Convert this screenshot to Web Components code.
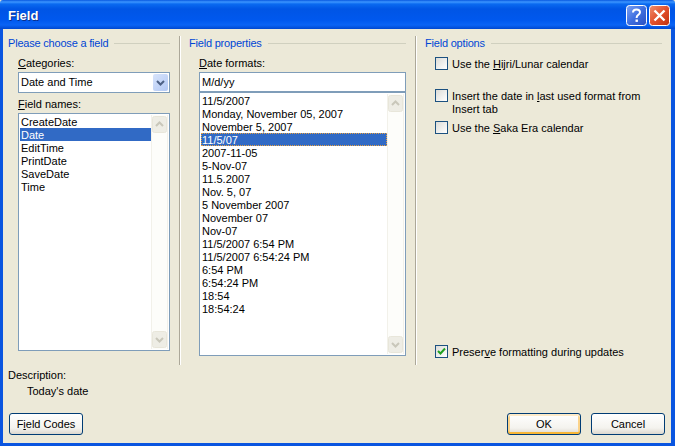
<!DOCTYPE html>
<html>
<head>
<meta charset="utf-8">
<title>Field</title>
<style>
    html, body { margin: 0; padding: 0; background: #ece9d8; overflow: hidden; }
</style>
</head>
<body>
<field-dialog heading="Field">
    <field-group heading="Please choose a field" slot="one">
        <field-label><u>C</u>ategories:</field-label>
        <combo-box>Date and Time</combo-box>
        <field-label style="margin-top:5px"><u>F</u>ield names:</field-label>
        <list-box style="height:238px">
            <list-item>CreateDate</list-item>
            <list-item selected>Date</list-item>
            <list-item>EditTime</list-item>
            <list-item>PrintDate</list-item>
            <list-item>SaveDate</list-item>
            <list-item>Time</list-item>
        </list-box>
    </field-group>
    <field-group heading="Field properties" slot="two">
        <field-label><u>D</u>ate formats:</field-label>
        <text-box>M/d/yy</text-box>
        <list-box style="height:264px">
            <list-item>11/5/2007</list-item>
            <list-item>Monday, November 05, 2007</list-item>
            <list-item>November 5, 2007</list-item>
            <list-item selected focused>11/5/07</list-item>
            <list-item>2007-11-05</list-item>
            <list-item>5-Nov-07</list-item>
            <list-item>11.5.2007</list-item>
            <list-item>Nov. 5, 07</list-item>
            <list-item>5 November 2007</list-item>
            <list-item>November 07</list-item>
            <list-item>Nov-07</list-item>
            <list-item>11/5/2007 6:54 PM</list-item>
            <list-item>11/5/2007 6:54:24 PM</list-item>
            <list-item>6:54 PM</list-item>
            <list-item>6:54:24 PM</list-item>
            <list-item>18:54</list-item>
            <list-item>18:54:24</list-item>
        </list-box>
    </field-group>
    <field-group heading="Field options" slot="three">
        <check-box>Use the <u>H</u>ijri/Lunar calendar</check-box>
        <check-box style="margin-top:18px">Insert the date in <u>l</u>ast used format from<br>Insert tab</check-box>
        <check-box style="margin-top:5px">Use the <u>S</u>aka Era calendar</check-box>
        <check-box style="margin-top:auto;margin-bottom:6px" checked>Preser<u>v</u>e formatting during updates</check-box>
    </field-group>
    <div slot="description">Description:</div>
    <div slot="description" style="margin:3px 0 0 19px">Today's date</div>
    <xp-button slot="left"><span>F<u>i</u>eld Codes</span></xp-button>
    <xp-button slot="right" default>OK</xp-button>
    <xp-button slot="right">Cancel</xp-button>
</field-dialog>

<script>
class FieldDialog extends HTMLElement {
    connectedCallback() {
        let shadowRoot = this.attachShadow({ mode: 'open' });
        shadowRoot.innerHTML = `
        <style>
            :host {
                display: flex;
                flex-direction: column;
                width: 675px;
                height: 446px;
                font: 11px/13px "Liberation Sans", sans-serif;
                color: #000;
            }
            .title {
                height: 29px;
                flex: none;
                display: flex;
                align-items: center;
                gap: 2px;
                padding: 2px 5px 0 8px;
                box-sizing: border-box;
                background: linear-gradient(180deg, #0858e0 0, #3c95ff 2px, #0a6af0 4px, #0055e5 9px, #0058ee 20px, #0a64f5 25px, #0048d0 29px);
                border-radius: 3px 3px 0 0;
            }
            .title b {
                flex: 1;
                color: #fff;
                font: bold 13px "Liberation Sans", sans-serif;
                text-shadow: 1px 1px 0 #0a2f8c;
            }
            .tbtn {
                width: 21px;
                height: 21px;
                display: block;
            }
            .client {
                flex: 1;
                display: flex;
                flex-direction: column;
                min-height: 0;
                background: #ece9d8;
                border: solid #0a55e0;
                border-width: 0 4px 3px 3px;
                box-shadow: 0 1px 0 #00209c;
                padding-top: 7px;
            }
            .cols {
                display: grid;
                grid-template-columns: 176px 236px 252px;
                height: 329px;
            }
            .cols > div {
                display: flex;
                min-height: 0;
            }
            .cols > div + div {
                border-left: 1px solid #aca899;
                box-shadow: inset 1px 0 0 #fff;
            }
            .desc {
                box-sizing: border-box;
                padding: 4px 0 0 5px;
                height: 48px;
            }
            .foot {
                display: flex;
                justify-content: space-between;
                padding: 0 6px 0 6px;
            }
            .foot div {
                display: flex;
                gap: 10px;
            }
        </style>
        <div class="title">
            <b>${this.getAttribute('heading')}</b>
            <svg class="tbtn" viewBox="0 0 21 21">
                <defs><linearGradient id="h" x1="0" y1="0" x2="1" y2="1"><stop offset="0" stop-color="#7ea2f2"/><stop offset=".5" stop-color="#3f6fe0"/><stop offset="1" stop-color="#2a4fc0"/></linearGradient></defs>
                <rect x=".5" y=".5" width="20" height="20" rx="3" fill="url(#h)" stroke="#fff"/>
                <path d="M7 7.5 Q7 4.5 10.5 4.5 Q14 4.5 14 7.3 Q14 9 12 10.2 Q10.6 11 10.6 13" fill="none" stroke="#fff" stroke-width="2"/>
                <rect x="9.5" y="14.5" width="2.4" height="2.4" fill="#fff"/>
            </svg>
            <svg class="tbtn" viewBox="0 0 21 21">
                <defs><linearGradient id="c" x1="0" y1="0" x2="1" y2="1"><stop offset="0" stop-color="#ee9070"/><stop offset=".5" stop-color="#e2502c"/><stop offset="1" stop-color="#c0300c"/></linearGradient></defs>
                <rect x=".5" y=".5" width="20" height="20" rx="3" fill="url(#c)" stroke="#fff"/>
                <path d="M5.5 5.5 L15.5 15.5 M15.5 5.5 L5.5 15.5" stroke="#fff" stroke-width="2.4"/>
            </svg>
        </div>
        <div class="client">
            <div class="cols">
                <div><slot name="one"></slot></div>
                <div><slot name="two"></slot></div>
                <div><slot name="three"></slot></div>
            </div>
            <div class="desc"><slot name="description"></slot></div>
            <div class="foot">
                <div><slot name="left"></slot></div>
                <div><slot name="right"></slot></div>
            </div>
        </div>
        `;
    }
}
customElements.define('field-dialog', FieldDialog);

class FieldGroup extends HTMLElement {
    connectedCallback() {
        let shadowRoot = this.attachShadow({ mode: 'open' });
        shadowRoot.innerHTML = `
        <style>
            :host {
                display: flex;
                flex-direction: column;
                width: 100%;
                box-sizing: border-box;
                padding: 0 5px 0 9px;
            }
            :host([slot="one"]) { padding: 0 9px 0 5px; }
            :host([slot="two"]) { padding-right: 9px; }
            .head {
                display: flex;
                align-items: center;
                gap: 6px;
                height: 14px;
                color: #0046d5;
            }
            .head span { letter-spacing: -.2px; }
            .head i {
                flex: 1;
                height: 0;
                border-top: 1px solid #d0d0bf;
            }
            .body {
                flex: 1;
                display: flex;
                flex-direction: column;
                min-height: 0;
                padding: 7px 0 0 10px;
            }
        </style>
        <div class="head"><span>${this.getAttribute('heading')}</span><i></i></div>
        <div class="body"><slot></slot></div>
        `;
    }
}
customElements.define('field-group', FieldGroup);

class FieldLabel extends HTMLElement {
    connectedCallback() {
        let shadowRoot = this.attachShadow({ mode: 'open' });
        shadowRoot.innerHTML = `
        <style>
            :host { display: block; height: 13px; margin-bottom: 2px; }
        </style>
        <slot></slot>
        `;
    }
}
customElements.define('field-label', FieldLabel);

class ComboBox extends HTMLElement {
    connectedCallback() {
        let shadowRoot = this.attachShadow({ mode: 'open' });
        shadowRoot.innerHTML = `
        <style>
            :host {
                display: flex;
                align-items: center;
                height: 21px;
                box-sizing: border-box;
                background: #fff;
                border: 1px solid #7f9db9;
                padding: 1px 1px 1px 2px;
            }
            span { flex: 1; }
            .btn {
                width: 15px;
                height: 17px;
                background: linear-gradient(135deg, #d8e4fb, #b2c8f4);
                border-radius: 2px;
                display: block;
            }
        </style>
        <span><slot></slot></span>
        <svg class="btn" viewBox="0 0 15 17"><path d="M4 7 L7.5 10.5 L11 7" fill="none" stroke="#4d6185" stroke-width="2"/></svg>
        `;
    }
}
customElements.define('combo-box', ComboBox);

class TextBox extends HTMLElement {
    connectedCallback() {
        let shadowRoot = this.attachShadow({ mode: 'open' });
        shadowRoot.innerHTML = `
        <style>
            :host {
                display: flex;
                align-items: center;
                height: 20px;
                box-sizing: border-box;
                background: #fff;
                border: 1px solid #7f9db9;
                padding-left: 2px;
            }
        </style>
        <slot></slot>
        `;
    }
}
customElements.define('text-box', TextBox);

class ListBox extends HTMLElement {
    connectedCallback() {
        let shadowRoot = this.attachShadow({ mode: 'open' });
        shadowRoot.innerHTML = `
        <style>
            :host {
                display: flex;
                box-sizing: border-box;
                background: #fff;
                border: 1px solid #7f9db9;
                padding: 1px;
            }
            .items {
                flex: 1;
                min-width: 0;
            }
            .bar {
                width: 17px;
                flex: none;
                display: flex;
                flex-direction: column;
                justify-content: space-between;
                background: #fdfdfa;
                box-sizing: border-box;
                padding: 1px 0;
                border-left: 1px solid #f2f1ea;
                border-right: 1px solid #f2f1ea;
            }
            svg { display: block; width: 15px; height: 17px; }
        </style>
        <div class="items"><slot></slot></div>
        <div class="bar">
            <svg viewBox="0 0 15 17"><rect x=".5" y=".5" width="14" height="16" rx="2" fill="#eeede5" stroke="#e8e6da"/><path d="M4 10 L7.5 6.5 L11 10" fill="none" stroke="#c9c7ba" stroke-width="2"/></svg>
            <svg viewBox="0 0 15 17"><rect x=".5" y=".5" width="14" height="16" rx="2" fill="#eeede5" stroke="#e8e6da"/><path d="M4 7 L7.5 10.5 L11 7" fill="none" stroke="#c9c7ba" stroke-width="2"/></svg>
        </div>
        `;
    }
}
customElements.define('list-box', ListBox);

class ListItem extends HTMLElement {
    connectedCallback() {
        let shadowRoot = this.attachShadow({ mode: 'open' });
        shadowRoot.innerHTML = `
        <style>
            :host {
                display: block;
                height: 13px;
                box-sizing: border-box;
                padding: 1px 0 0 1px;
                line-height: 12px;
                white-space: nowrap;
            }
            :host([selected]) {
                background: #316ac5;
                color: #fff;
            }
            :host([focused]) {
                outline: 1px dotted #e8a040;
                outline-offset: -1px;
            }
        </style>
        <slot></slot>
        `;
    }
}
customElements.define('list-item', ListItem);

class CheckBox extends HTMLElement {
    connectedCallback() {
        let shadowRoot = this.attachShadow({ mode: 'open' });
        shadowRoot.innerHTML = `
        <style>
            :host {
                display: flex;
                gap: 4px;
                align-items: flex-start;
            }
            .box {
                width: 13px;
                height: 13px;
                flex: none;
                box-sizing: border-box;
                border: 1px solid #1c5180;
                background: linear-gradient(135deg, #dcdcd7, #fff);
                display: block;
            }
            .text { padding-top: 1px; }
            svg { display: block; width: 11px; height: 11px; }
        </style>
        <span class="box">${this.hasAttribute('checked') ? '<svg viewBox="0 0 11 11"><path d="M2 5 L4.5 7.5 L9 2.5" fill="none" stroke="#21a121" stroke-width="2"/></svg>' : ''}</span>
        <span class="text"><slot></slot></span>
        `;
    }
}
customElements.define('check-box', CheckBox);

class XpButton extends HTMLElement {
    connectedCallback() {
        let shadowRoot = this.attachShadow({ mode: 'open' });
        shadowRoot.innerHTML = `
        <style>
            :host {
                display: flex;
                align-items: center;
                justify-content: center;
                width: 74px;
                height: 22px;
                box-sizing: border-box;
                border: 1px solid #003c74;
                border-radius: 3px;
                background: linear-gradient(180deg, #fff 0, #f4f3ee 70%, #dcd8ce 100%);
            }
            :host([default]) {
                box-shadow: inset 0 2px 0 #fdeac8, inset 0 -2px 0 #f8b636, inset 2px 0 0 #fbd38a, inset -2px 0 0 #fbd38a;
            }
        </style>
        <slot></slot>
        `;
    }
}
customElements.define('xp-button', XpButton);
</script>
</body>
</html>
